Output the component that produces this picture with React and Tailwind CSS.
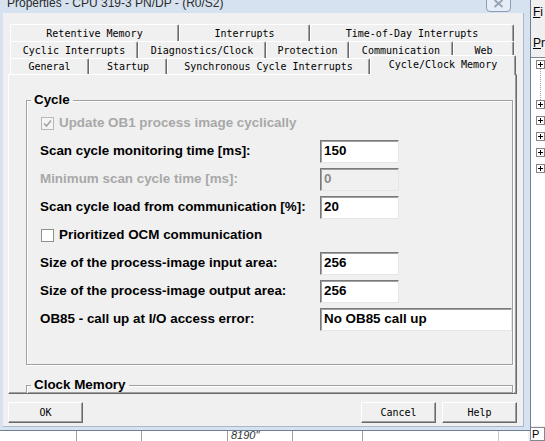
import React from "react";

const mono = "font-['DejaVu_Sans_Mono','Liberation_Mono',monospace] text-[10px] text-black";
const sans = "font-['Liberation_Sans',Arial,sans-serif]";

const row1 = [
  ["Retentive Memory", "w-[169px]"],
  ["Interrupts", "w-[131px]"],
  ["Time-of-Day Interrupts", "w-[204px]"],
];
const row2 = [
  ["Cyclic Interrupts", "w-[128px]"],
  ["Diagnostics/Clock", "w-[128px]"],
  ["Protection", "w-[83px]"],
  ["Communication", "w-[104px]"],
  ["Web", "w-[61px]"],
];
const row3 = [
  ["General", "w-[79px]"],
  ["Startup", "w-[78px]"],
  ["Synchronous Cycle Interrupts", "w-[203px]"],
];

function Tab({ label, w }) {
  return (
    <div
      className={`${w} h-full shrink-0 flex items-center justify-center whitespace-nowrap bg-[#f0f0f0] border-t border-l border-r border-t-white border-l-white border-r-[#696969] shadow-[inset_-1px_0_0_#a0a0a0] rounded-t-[2px]`}
    >
      {label}
    </div>
  );
}

function CheckBox({ checked, disabled }) {
  return (
    <span
      className={`w-[13px] h-[13px] shrink-0 flex items-center justify-center border ${
        disabled ? "border-[#b8b8b8] bg-[#f4f4f4]" : "border-[#8e8f8f] bg-white"
      }`}
    >
      {checked && (
        <svg width="9" height="9" viewBox="0 0 9 9">
          <path d="M1 4.5 L3.5 7 L8 1.5" stroke={disabled ? "#a3a3a3" : "#222"} strokeWidth="1.6" fill="none" />
        </svg>
      )}
    </span>
  );
}

function CheckRow({ label, checked, disabled }) {
  return (
    <div className="flex items-center h-[28px]">
      <div className="ml-px flex items-center gap-[5px]">
        <CheckBox checked={checked} disabled={disabled} />
        <span className={disabled ? "text-[#a8a8a8]" : "text-black"}>{label}</span>
      </div>
    </div>
  );
}

function FieldRow({ label, value, disabled, wide }) {
  return (
    <div className="flex items-center h-[28px]">
      <span className={`w-[280px] shrink-0 whitespace-nowrap ${disabled ? "text-[#a8a8a8]" : "text-black"}`}>
        {label}
      </span>
      <div
        className={`${wide ? "w-[192px]" : "w-[79px]"} h-[23px] flex items-center pl-[3px] border border-t-[#7a7a7a] border-l-[#7a7a7a] border-r-[#e6e6e6] border-b-[#e6e6e6] shadow-[inset_1px_1px_0_#a0a0a0] ${
          disabled ? "bg-[#f0f0f0] text-[#8a8a8a]" : "bg-white text-black"
        }`}
      >
        {value}
      </div>
    </div>
  );
}

function Btn({ children, extra }) {
  return (
    <div
      className={`w-[75px] h-full flex items-center justify-center border border-t-white border-l-white border-r-[#696969] border-b-[#696969] shadow-[inset_-1px_-1px_0_#a0a0a0,0_0_0_0_#adadad] ${extra || ""}`}
    >
      {children}
    </div>
  );
}

function PlusBox({ extra }) {
  return (
    <div className={`w-[9px] h-[9px] border border-[#848484] bg-white flex items-center justify-center ${extra || ""}`}>
      <svg width="7" height="7" viewBox="0 0 7 7">
        <path d="M1 3.5 H6 M3.5 1 V6" stroke="#000" strokeWidth="1" />
      </svg>
    </div>
  );
}

export default function App() {
  return (
    <div className={`relative w-[545px] h-[441px] overflow-hidden bg-[#f0f0f0] ${sans}`}>
      {/* application behind the dialog */}
      <div className="flex h-full">
        <div className="w-[531px] flex flex-col">
          <div className="h-[431px] bg-[#f0f0f0]" />
          <div className="flex-1 flex bg-white border-t border-[#a0a0a0] text-[11px] italic leading-none">
            <div className="w-[77px] border-r border-[#a0a0a0]" />
            <div className="w-[65px] border-r border-[#a0a0a0]" />
            <div className="w-[86px] border-r border-[#a0a0a0]" />
            <div className="w-[65px] border-r border-[#a0a0a0] pl-[3px] pt-[2px] text-[#333]">8190"</div>
            <div className="w-[70px] border-r border-[#a0a0a0]" />
            <div className="w-[136px] border-r border-[#c8c8c8]" />
            <div className="flex-1" />
          </div>
        </div>
        <div className="flex-1 flex flex-col pl-[2px] text-[12px] text-black">
          <div className="h-[57px] pl-[3px] leading-none">
            <div className="pt-[6px]"><span className="underline">F</span>i</div>
            <div className="pt-[19px]"><span className="underline">P</span>r</div>
          </div>
          <div className="h-[370px] border-l border-t border-[#828790] bg-white pl-[5px] pt-[2px]">
            <PlusBox />
            <div className="ml-[4px] h-[31px] border-l border-dotted border-[#a0a0a0]" />
            <PlusBox />
            <PlusBox extra="mt-[7px]" />
            <PlusBox extra="mt-[7px]" />
            <PlusBox extra="mt-[7px]" />
            <PlusBox extra="mt-[7px]" />
          </div>
          <div className="flex-1 mt-px border border-[#828790] bg-white text-[11px] leading-none pl-px pt-px">P</div>
        </div>
      </div>

      {/* dialog window */}
      <div className="absolute left-0 top-[-8px] w-[531px] h-[439px] flex flex-col bg-[#d6e2ef] border-r border-b border-[#6d7f96] pl-[3px] pr-[6px] pb-[3px]">
        <div className="h-[21px] flex items-center">
          <div className="flex-1 pl-[4px] text-[12px] text-[#2b2b2b] leading-[14px] whitespace-nowrap">
            Properties - CPU 319-3 PN/DP - (R0/S2)
          </div>
          <div className="w-[25px] h-[20px] self-start mr-[13px] rounded-b-[4px] border border-[#8a9bb2] bg-[#e6edf6] flex items-end justify-center pb-[3px]">
            <svg width="11" height="9" viewBox="0 0 11 9">
              <path d="M1.5 1 L9.5 8 M9.5 1 L1.5 8" stroke="#9aa6b6" strokeWidth="2" />
            </svg>
          </div>
        </div>

        <div className={`flex-1 flex flex-col bg-[#f0f0f0] border-r border-b border-[#a9b7c9] pl-[5px] pr-[6px] pt-[11px] ${mono}`}>
          {/* tab rows */}
          <div className="flex h-[17px] ml-[2px]">
            {row1.map(([l, w]) => (
              <Tab key={l} label={l} w={w} />
            ))}
          </div>
          <div className="flex h-[17px] ml-[2px]">
            {row2.map(([l, w]) => (
              <Tab key={l} label={l} w={w} />
            ))}
          </div>
          <div className="flex h-[16px] ml-[2px] items-end">
            {row3.map(([l, w]) => (
              <Tab key={l} label={l} w={w} />
            ))}
            <div className="relative z-10 w-[146px] h-[20px] -mb-px shrink-0 flex items-center justify-center pb-[3px] bg-[#f0f0f0] border-t border-l border-r border-t-white border-l-white border-r-[#696969] shadow-[inset_-1px_0_0_#a0a0a0] rounded-t-[2px] whitespace-nowrap">
              Cycle/Clock Memory
            </div>
          </div>

          {/* tab page */}
          <div className={`h-[320px] overflow-hidden border border-t-white border-l-white border-r-[#696969] border-b-[#696969] shadow-[inset_-1px_-1px_0_#a0a0a0] pl-[17px] pr-[3px] ${sans} font-bold text-[13.4px] text-black`}>
            <fieldset className="mt-[17px] p-0 border border-[#a0a0a0] shadow-[1px_1px_0_#fff,inset_1px_1px_0_#fff]">
              <legend className="ml-[4px] px-[3px] leading-[16px] text-[13.4px]">Cycle</legend>
              <div className="pl-[13px] pt-px pb-[31px] leading-[16px]">
                <CheckRow label="Update OB1 process image cyclically" checked disabled />
                <FieldRow label="Scan cycle monitoring time [ms]:" value="150" />
                <FieldRow label="Minimum scan cycle time [ms]:" value="0" disabled />
                <FieldRow label="Scan cycle load from communication [%]:" value="20" />
                <CheckRow label="Prioritized OCM communication" />
                <FieldRow label="Size of the process-image input area:" value="256" />
                <FieldRow label="Size of the process-image output area:" value="256" />
                <FieldRow label="OB85 - call up at I/O access error:" value="No OB85 call up" wide />
              </div>
            </fieldset>
            <fieldset className="mt-[12px] p-0 border border-[#a0a0a0] shadow-[1px_1px_0_#fff,inset_1px_1px_0_#fff]">
              <legend className="ml-[4px] px-[3px] leading-[16px] text-[13.4px]">Clock Memory</legend>
              <div className="h-[40px]" />
            </fieldset>
          </div>

          {/* buttons */}
          <div className="flex mt-[8px] h-[21px]">
            <Btn>OK</Btn>
            <div className="flex-1" />
            <Btn>Cancel</Btn>
            <Btn extra="ml-[6px]">Help</Btn>
          </div>
        </div>
      </div>
    </div>
  );
}
